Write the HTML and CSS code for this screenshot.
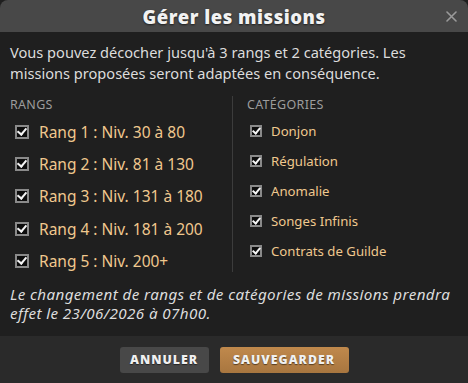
FILE: index.html
```html
<!DOCTYPE html>
<html lang="fr">
<head>
  <meta charset="UTF-8" />
  <title>Gérer les missions</title>
  <link rel="stylesheet" href="styles.css">
</head>
<body>
  <div class="modal">
    <header class="modal-header">
      <h1>Gérer les missions</h1>
      <svg class="close" width="11" height="11" viewBox="0 0 11 11">
        <path d="M1 1L10 10M10 1L1 10" stroke="#9a9a9a" stroke-width="1.6" stroke-linecap="round"/>
      </svg>
    </header>

    <main class="modal-body">
      <p class="intro">Vous pouvez décocher jusqu'à 3 rangs et 2 catégories. Les missions proposées seront adaptées en conséquence.</p>

      <div class="columns">
        <div class="col col-ranks">
          <h2 class="col-title">Rangs</h2>
          <label class="opt"><span class="box"></span>Rang 1 : Niv. 30 à 80</label>
          <label class="opt"><span class="box"></span>Rang 2 : Niv. 81 à 130</label>
          <label class="opt"><span class="box"></span>Rang 3 : Niv. 131 à 180</label>
          <label class="opt"><span class="box"></span>Rang 4 : Niv. 181 à 200</label>
          <label class="opt"><span class="box"></span>Rang 5 : Niv. 200+</label>
        </div>
        <div class="col col-cats">
          <h2 class="col-title">Catégories</h2>
          <label class="opt"><span class="box"></span>Donjon</label>
          <label class="opt"><span class="box"></span>Régulation</label>
          <label class="opt"><span class="box"></span>Anomalie</label>
          <label class="opt"><span class="box"></span>Songes Infinis</label>
          <label class="opt"><span class="box"></span>Contrats de Guilde</label>
        </div>
      </div>

      <p class="note">Le changement de rangs et de catégories de missions prendra effet le 23/06/2026 à 07h00.</p>
    </main>

    <footer class="modal-footer">
      <button class="btn btn-cancel">Annuler</button>
      <button class="btn btn-save">Sauvegarder</button>
    </footer>
  </div>
</body>
</html>
```

FILE: styles.css
```css
html, body {
  margin: 0;
  padding: 0;
  background: #1f1f1f;
}
body {
  font-family: 'Noto Sans', sans-serif;
  width: 468px;
  height: 383px;
  overflow: hidden;
}
.modal {
  display: flex;
  flex-direction: column;
  height: 383px;
  background: #1f1f1f;
}
.modal-header {
  position: relative;
  height: 32px;
  background: #484848;
  border-radius: 8px 8px 0 0;
  display: flex;
  align-items: center;
  justify-content: center;
}
.modal-header h1 {
  margin: 0;
  font-family: 'Open Sans', sans-serif;
  font-weight: 800;
  font-size: 18.5px;
  letter-spacing: 0.5px;
  color: #f2f2f2;
  text-shadow: 0 1px 2px rgba(0, 0, 0, 0.6);
}
.close {
  position: absolute;
  right: 11px;
  top: 11px;
}
.modal-body {
  flex: 1;
  padding: 0 10px;
}
.intro {
  margin: 10px 0 0;
  font-size: 14.6px;
  line-height: 21px;
  color: #dcdcdc;
}
.columns {
  display: flex;
  align-items: flex-start;
  margin-top: 12px;
}
.col {
  display: flex;
  flex-direction: column;
}
.col-ranks {
  width: 222px;
}
.col-cats {
  border-left: 1px solid #3c3c3c;
  padding-left: 14px;
  padding-bottom: 6px;
}
.col-title {
  margin: 0 0 3px;
  font-size: 12.5px;
  font-weight: 400;
  letter-spacing: 0.3px;
  text-transform: uppercase;
  color: #9c9c9c;
}
.opt {
  display: flex;
  align-items: center;
  color: #f0c88e;
}
.col-ranks .opt {
  height: 32.2px;
  font-size: 15.5px;
  padding-left: 5px;
}
.col-cats .opt {
  height: 30px;
  font-size: 13.2px;
  padding-left: 3px;
}
.box {
  position: relative;
  box-sizing: border-box;
  border: 2px solid #8a8a8a;
  background: #0c0c0c;
  flex: none;
}
.col-ranks .box {
  width: 14px;
  height: 14px;
  margin-right: 10px;
}
.col-cats .box {
  width: 12px;
  height: 12px;
  margin-right: 9px;
}
.box::after {
  content: "";
  position: absolute;
  left: 2px;
  top: -1px;
  width: 4px;
  height: 7px;
  border: solid #f4f4f4;
  border-width: 0 2px 2px 0;
  transform: rotate(40deg);
}
.col-cats .box::after {
  left: 1.5px;
  top: -1.5px;
  width: 3px;
  height: 6px;
}
.note {
  margin: 8px 0 0;
  font-size: 15.2px;
  letter-spacing: 0.4px;
  line-height: 19px;
  font-style: italic;
  color: #dcdcdc;
}
.modal-footer {
  height: 47px;
  background: #2a2a2a;
  display: flex;
  justify-content: center;
  align-items: center;
  gap: 11px;
}
.btn {
  height: 26px;
  border: none;
  border-radius: 3px;
  font-family: 'Open Sans', sans-serif;
  font-weight: 800;
  font-size: 12.3px;
  letter-spacing: 1px;
  text-transform: uppercase;
  color: #f0f0f0;
  text-shadow: 0 1px 1px rgba(0, 0, 0, 0.5);
  cursor: pointer;
}
.btn-cancel {
  width: 89px;
  background: #484848;
}
.btn-save {
  width: 129px;
  background: linear-gradient(#c0894c, #a8763f);
}
```
